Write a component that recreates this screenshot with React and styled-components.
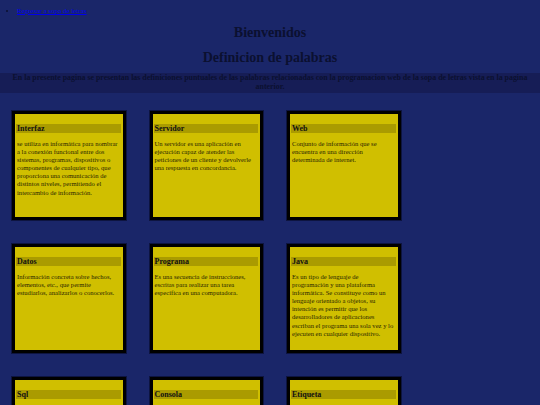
import React from "react";
import styled, { createGlobalStyle } from "styled-components";

const GlobalStyles = createGlobalStyle`
  html,
  body {
    margin: 0;
    padding: 0;
  }
  body {
    background-color: #1a2669;
    font-family: "Liberation Serif", "Times New Roman", serif;
    color: #0b1030;
  }
`;

const Page = styled.div`
  width: 540px;
  min-height: 405px;
  padding-bottom: 24px;
`;

const Nav = styled.ul`
  margin: 0;
  padding: 7px 0 0 17px;
  font-size: 7px;
  line-height: 8px;
`;

const NavLink = styled.a`
  color: #0000ee;
  text-decoration: underline;
`;

const Heading = styled.h1`
  margin: ${(p) => p.$top}px 0 0;
  font-size: 14px;
  line-height: 16px;
  font-weight: bold;
  text-align: center;
  color: #0b1030;
`;

const Intro = styled.p`
  margin: 7px 0 0;
  padding: 1px 10px 2px;
  background-color: #161d56;
  font-size: 7.9px;
  line-height: 8.5px;
  font-weight: bold;
  text-align: center;
  color: #0b1030;
`;

const Grid = styled.div`
  display: grid;
  grid-template-columns: repeat(3, 113.5px);
  grid-auto-rows: 109px;
  column-gap: 24px;
  row-gap: 24px;
  margin-top: 18px;
  padding-left: 12px;
`;

const Card = styled.div`
  box-sizing: border-box;
  background-color: #d0bf00;
  border: 3px solid #000;
  box-shadow: 0 0 0 1px #0d1440;
  padding: 10px 2px 0 1px;
  overflow: hidden;
`;

const CardTitle = styled.h3`
  margin: 0;
  padding: 0 1px;
  background-color: #aa9b00;
  font-size: 8px;
  line-height: 9px;
  font-weight: bold;
  color: #111;
`;

const CardText = styled.p`
  margin: 7px 0 0;
  padding: 0 1px;
  font-size: 6.6px;
  line-height: 8.1px;
  color: #2a2600;
`;

const words = [
  {
    title: "Interfaz",
    text: "se utiliza en informática para nombrar a la conexión funcional entre dos sistemas, programas, dispositivos o componentes de cualquier tipo, que proporciona una comunicación de distintos niveles, permitiendo el intercambio de información.",
  },
  {
    title: "Servidor",
    text: "Un servidor es una aplicación en ejecución capaz de atender las peticiones de un cliente y devolverle una respuesta en concordancia.",
  },
  {
    title: "Web",
    text: "Conjunto de información que se encuentra en una dirección determinada de internet.",
  },
  {
    title: "Datos",
    text: "Información concreta sobre hechos, elementos, etc., que permite estudiarlos, analizarlos o conocerlos.",
  },
  {
    title: "Programa",
    text: "Es una secuencia de instrucciones, escritas para realizar una tarea específica en una computadora.",
  },
  {
    title: "Java",
    text: "Es un tipo de lenguaje de programación y una plataforma informática. Se constituye como un lenguaje orientado a objetos, su intención es permitir que los desarrolladores de aplicaciones escriban el programa una sola vez y lo ejecuten en cualquier dispositivo.",
  },
  {
    title: "Sql",
    text: "Lenguaje de consulta estructurado que permite gestionar y consultar bases de datos relacionales.",
  },
  {
    title: "Consola",
    text: "Interfaz de texto que permite introducir comandos y ver los resultados de un programa.",
  },
  {
    title: "Etiqueta",
    text: "Elemento del lenguaje HTML que indica el inicio y el final de una parte del documento.",
  },
];

export default function App() {
  return (
    <Page>
      <GlobalStyles />
      <Nav>
        <li>
          <NavLink href="#">Regresar a sopa de letras</NavLink>
        </li>
      </Nav>
      <Heading $top={10}>Bienvenidos</Heading>
      <Heading $top={9}>Definicion de palabras</Heading>
      <Intro>
        En la presente pagina se presentan las definiciones puntuales de las
        palabras relacionadas con la programacion web de la sopa de letras
        vista en la pagina anterior.
      </Intro>
      <Grid>
        {words.map((w) => (
          <Card key={w.title}>
            <CardTitle>{w.title}</CardTitle>
            <CardText>{w.text}</CardText>
          </Card>
        ))}
      </Grid>
    </Page>
  );
}
